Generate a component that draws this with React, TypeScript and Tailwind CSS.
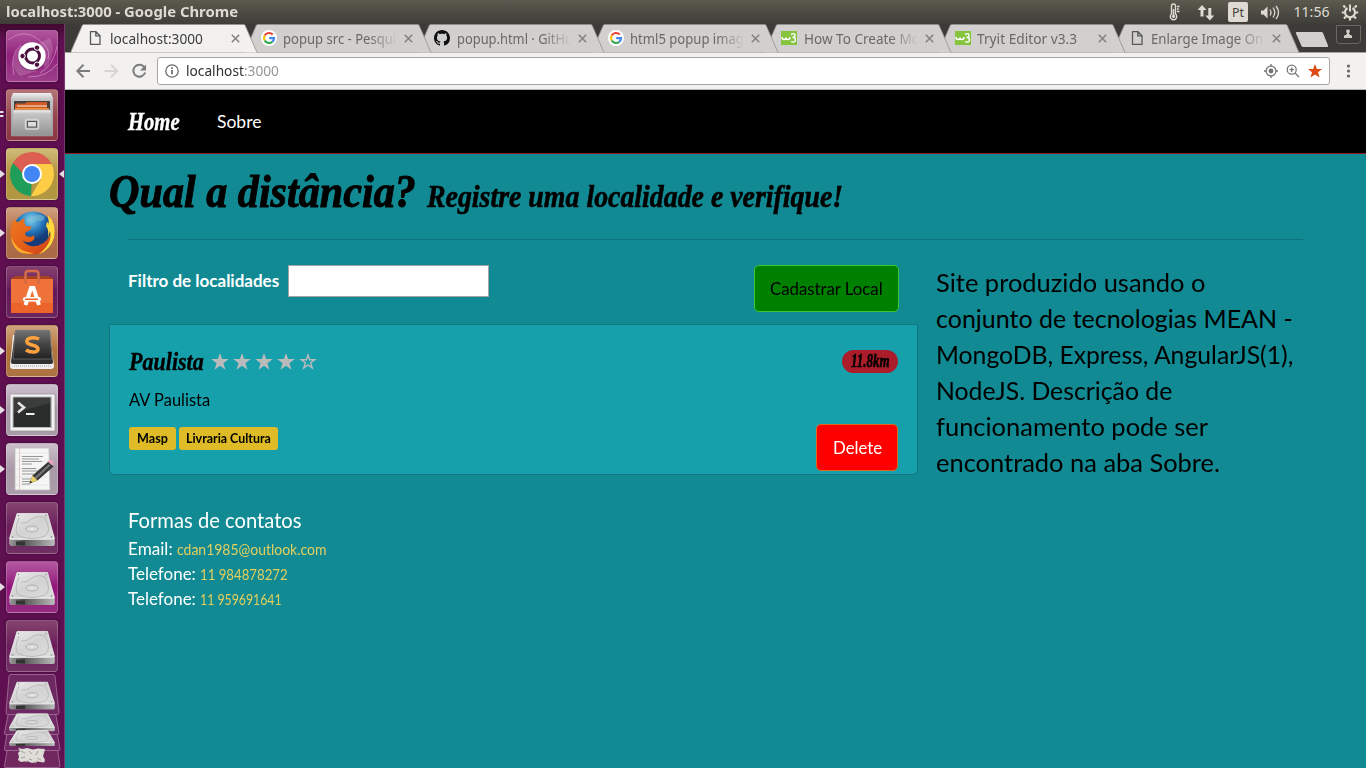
import { useLayoutEffect, useRef, useState } from "react";
import type { ReactNode } from "react";

const UI = "font-['Noto_Sans','Liberation_Sans',sans-serif]";
const SCRIPT = "font-['Liberation_Serif',serif] font-bold italic";
const BODY = "font-['Lato','Liberation_Sans',sans-serif]";

/* A single line of text whose glyphs are scaled to span a given width. */
function Fit({ w, className = "", children }: { w: number; className?: string; children: ReactNode }) {
  const ref = useRef<HTMLSpanElement>(null);
  const [k, setK] = useState(1);
  useLayoutEffect(() => {
    if (ref.current) setK(w / ref.current.offsetWidth);
  }, [w]);
  return (
    <span className={`inline-block shrink-0 whitespace-nowrap ${className}`} style={{ width: w }}>
      <span ref={ref} className="inline-block origin-left" style={{ transform: `scaleX(${k})` }}>
        {children}
      </span>
    </span>
  );
}

/* ---------- top panel ---------- */
function TopPanel() {
  return (
    <header className={`flex h-6 shrink-0 items-center bg-linear-to-b from-[#5c5a4f] to-[#3e3d38] pl-1.5 text-[#dfdbd2] ${UI}`}>
      <Fit w={232} className="text-[13.5px] leading-6 font-bold">localhost:3000 - Google Chrome</Fit>
      <svg className="ml-auto h-6 w-[200px]" viewBox="1166 0 200 24" fill="none" stroke="#dfdbd2">
        <path d="M1171.5 14V6a2 2 0 0 1 4 0v8a3.2 3.2 0 1 1-4 0z" strokeWidth="1.4" />
        <path d="M1173.5 9v7M1177 6.5h2.5M1177 9h1.8M1177 11.5h2.5" strokeWidth="1.5" />
        <circle cx="1173.5" cy="16.3" r="1.6" fill="#dfdbd2" stroke="none" />
        <path d="M1202 5l4.500 5h-3v6.500h-3V10h-3zM1209.800 20.500l-4.500-5h3V8h3v7.500h3z" fill="#dfdbd2" stroke="none" />
        <rect x="1228" y="2" width="20" height="20" rx="2" fill="#dfdbd2" stroke="none" />
        <path d="M1261 10.500h2.500l4-4v12l-4-4h-2.500z" fill="#dfdbd2" stroke="none" />
        <path d="M1270 9.500q2 3 0 6M1273 7.500q3.500 5 0 10M1276 6q5 6.500 0 13" strokeWidth="1.300" />
        <text x="1232" y="17" fontSize="12" fill="#45433c" stroke="none" fontFamily="Noto Sans" textLength="12" lengthAdjust="spacingAndGlyphs">Pt</text>
        <text x="1293.500" y="17" fontSize="14" fill="#dfdbd2" stroke="none" fontFamily="Noto Sans" textLength="36" lengthAdjust="spacingAndGlyphs">11:56</text>
        <path d="M1347.500 8a5 5 0 1 0 5 0" strokeWidth="2.100" />
        <path d="M1350 4.500v7" strokeWidth="2" />
        <path d="M1345.300 7.500l-2-2M1354.700 7.500l2-2M1344.500 12.500h-2.700M1355.500 12.500h2.700M1346 16.500l-2 2M1354 16.500l2 2M1350 18v2.500" strokeWidth="2.200" />
      </svg>
    </header>
  );
}

/* ---------- launcher ---------- */
function Tile({ bg, mark, active, children }: { bg: string; mark?: number; active?: boolean; children: ReactNode }) {
  return (
    <div className="relative flex h-[52px] w-full shrink-0 pl-[6px]">
      <div className={`relative h-[52px] w-[52px] overflow-hidden rounded-[4px] border border-white/20 shadow-[0_0_3px_rgba(0,0,0,0.4)] ${bg}`}>
        <svg className="-m-px h-[52px] w-[52px]" viewBox="0 0 52 52">{children}</svg>
      </div>
      {mark === 1 && <svg className="absolute top-[21px] left-0 h-[10px] w-[5px]" viewBox="0 0 5 10"><path d="M0 1l5 4-5 4z" fill="#e4dfe2" /></svg>}
      {mark === 2 && <svg className="absolute top-[21px] left-0 h-[10px] w-[5px]" viewBox="0 0 5 10"><path d="M0 1h3l1 1-1 1H0zM0 5h3l1 1-1 1H0z" fill="#e4dfe2" /></svg>}
      {active && <svg className="absolute top-[21px] right-0 h-[10px] w-[5px]" viewBox="0 0 5 10"><path d="M5 1L0 5l5 4z" fill="#e4dfe2" /></svg>}
    </div>
  );
}

function DiskArt() {
  return (
    <g>
      <path d="M11 11.500h30.500l7 25v5q0 2-2 2h-41q-2 0-2-2v-5z" fill="#d9d9d9" />
      <path d="M11 11.500h30.500l7 25h-45z" fill="url(#metal)" stroke="#eee" strokeWidth=".6" />
      <path d="M4 38h44.500v4.500q0 1.500-1.500 1.500H5.500Q4 44 4 42.500z" fill="url(#edge)" />
      <path d="M10 39.500h9v4h-9z" fill="#333" />
      <path d="M13 16q-6 14 0 18 13 5 26 0 7-5 0-18-7-3-13 1-5 5-11 4" fill="none" stroke="#b6b6b6" strokeWidth=".9" />
      <ellipse cx="26" cy="27" rx="6" ry="3" fill="#ddd" stroke="#aaa" strokeWidth=".9" />
      <ellipse cx="26" cy="27" rx="3" ry="1.300" fill="#eee" stroke="#c4c4c4" strokeWidth=".5" />
      <g fill="#888"><circle cx="12.500" cy="13.500" r=".7" /><circle cx="40" cy="13.500" r=".7" /><circle cx="6.500" cy="35" r=".8" /><circle cx="45.500" cy="35" r=".8" /></g>
    </g>
  );
}

const DISK_BG = "bg-linear-to-b from-[#84446f] via-[#6a1c5a] to-[#703064]";

function Launcher() {
  return (
    <aside className="flex w-[65px] shrink-0 flex-col gap-[7px] overflow-hidden border-r border-[#75396c] bg-linear-to-b from-[#40092f] via-[#5f0f50] via-[2%] to-[#5f1051] pt-[6px]">
      <Tile bg="bg-linear-to-b from-[#b0559c] via-[#91207c] to-[#9c3f8a]">
        <g fill="none" stroke="#dca4d0" strokeWidth="1" opacity=".6">
          <path d="M2 10q16-12 30-1 14 10 10 20M8 45Q3 25 15 15M22 47q20 0 29-13M51 16Q48 35 34 43" />
        </g>
        <path d="M7 36Q7 17 24 12l-7 27zM44 8q8 17-5 30l-8-24zM14 46q-8-6-6-16l23 11z" fill="#fff" opacity=".16" />
        <circle cx="26" cy="27" r="14" fill="#3b0731" opacity=".3" />
        <circle cx="26" cy="26" r="13.700" fill="#fff" />
        <circle cx="26.500" cy="26" r="7" fill="none" stroke="#4b1040" strokeWidth="3" />
        <g fill="#4b1040" stroke="#fff" strokeWidth="1"><circle cx="16.500" cy="26" r="2.700" /><circle cx="31" cy="17.600" r="2.700" /><circle cx="31" cy="34.700" r="2.700" /></g>
      </Tile>
      <Tile bg="bg-linear-to-b from-[#b57579] via-[#96464f] to-[#8c3443]" mark={2}>
        <defs>
          <linearGradient id="metal" x1="0" y1="0" x2="1" y2="1"><stop offset="0" stopColor="#ececec" /><stop offset=".5" stopColor="#d2d2d2" /><stop offset="1" stopColor="#dedede" /></linearGradient>
          <linearGradient id="edge" x1="0" y1="0" x2="1" y2="0"><stop offset="0" stopColor="#999" /><stop offset=".3" stopColor="#555" /><stop offset="1" stopColor="#bbb" /></linearGradient>
          <linearGradient id="cab" x1="0" y1="0" x2="0" y2="1"><stop offset="0" stopColor="#f0f0f0" /><stop offset=".15" stopColor="#c4c4c4" /><stop offset="1" stopColor="#919191" /></linearGradient>
          <linearGradient id="dark" x1="0" y1="0" x2="0" y2="1"><stop offset="0" stopColor="#747474" /><stop offset=".5" stopColor="#444" /><stop offset="1" stopColor="#222" /></linearGradient>
          <radialGradient id="globe" cx=".45" cy=".2"><stop offset="0" stopColor="#80d2f0" /><stop offset=".6" stopColor="#2374b8" /><stop offset="1" stopColor="#173a78" /></radialGradient>
          <linearGradient id="fox" x1="0" y1="0" x2="1" y2="1"><stop offset="0" stopColor="#ed7b20" /><stop offset=".6" stopColor="#e25a16" /><stop offset="1" stopColor="#c7371b" /></linearGradient>
        </defs>
        <path d="M7 4h38l2 5v38H5V9z" fill="url(#cab)" />
        <path d="M8 12h36v10H8z" fill="#46413e" />
        <path d="M9 16q0-1.500 2-1.500h8l2-1.500h20v9H9z" fill="#cf5a24" />
        <path d="M9 19h34v3H9z" fill="#e98b3a" /><path d="M11 17h30" stroke="#fff3e0" />
        <path d="M7 21h38l1.500 26h-41z" fill="url(#cab)" stroke="#aaa" strokeWidth=".5" />
        <rect x="19.500" y="30.500" width="13" height="9.500" rx="1.500" fill="none" stroke="#d5d5d5" strokeWidth="1.600" />
        <rect x="21.500" y="32.500" width="9" height="5.500" fill="#ddd" stroke="#555" />
      </Tile>
      <Tile bg="bg-linear-to-b from-[#d0ba78] via-[#b3943e] to-[#b29742]" mark={1} active>
        <path d="M26 26L7 15A22 22 0 0 1 45.500 16z" fill="#d95b4e" />
        <path d="M26 26L25 48A22 22 0 0 1 7 15z" fill="#1f9d5b" />
        <path d="M26 16h19.500A22 22 0 0 1 25 48l10-17z" fill="#fdce45" />
        <path d="M7 15A22 22 0 0 1 45.500 16H26q-8 1-9.500 9z" fill="#dc5f52" />
        <circle cx="26" cy="26" r="10" fill="#fff" /><circle cx="26" cy="26" r="8" fill="#4285f4" />
      </Tile>
      <Tile bg="bg-linear-to-b from-[#cf9f80] via-[#b26d46] to-[#a96a48]" mark={1}>
        <circle cx="27" cy="25" r="20.500" fill="url(#globe)" />
        <path d="M31 8q6-1 8 3-3 5-8 2-6 4-11 1 3-5 11-6z" fill="#7dbbd0" opacity=".6" />
        <path d="M43 9q8 9 4.500 23Q41 47 26 47.500 8 46 4.500 29q-.5-12 4-17 1 3 4 3l6-4q-1 6 2 8l5 .5-1 3-5 3q-1 3 2 4 3 1 6-1 3 3-2 6-5 2-9-1 6 8 16 5 11-4 13-16z" fill="url(#fox)" />
        <path d="M42 8q9 9 6 23-4 12-15 16 14-11 11-23l-2 7q1-9-2-12l1-4q2 1 2 3z" fill="#ffd83b" />
        <path d="M5 29q5 16 23 17-17 4-22-11z" fill="#ffad2b" />
      </Tile>
      <Tile bg="bg-linear-to-b from-[#83406f] via-[#651559] to-[#692660]">
        <path d="M5 13h42v34H5z" fill="#ee723a" /><path d="M5 13l4-3h34l4 3z" fill="#a7431f" />
        <path d="M5 37h42v10H5z" fill="#e95f25" opacity=".7" />
        <path d="M19.500 18V8q0-3 3-3h7q3 0 3 3v10" fill="none" stroke="#d66d46" strokeWidth="2.500" />
        <path d="M19.500 39l5.500-17h2.500L33 39" fill="none" stroke="#fff" strokeWidth="4" />
        <rect x="17" y="31" width="18" height="4.500" rx="2" fill="#fff" /><path d="M19 33.200h13" stroke="#e76525" strokeWidth="1.500" />
      </Tile>
      <Tile bg="bg-linear-to-b from-[#d0a37a] via-[#b1733a] to-[#ac7342]" mark={1}>
        <path d="M7 10l37-2 4 33q0 3-3 3H7q-3 0-3-3z" fill="#eee" />
        <path d="M8 41h37" stroke="#aaa" strokeWidth="1" strokeDasharray="1 1" />
        <path d="M9 7q0-2 2-2h31q2 0 2 2l3 30q0 2-2 2H7q-2 0-2-2z" fill="#303030" />
        <path d="M9 7q0-2 2-2h31q2 0 2 2l2 27H7z" fill="url(#dark)" stroke="#888" strokeWidth=".6" />
        <path d="M33 14q-4-2-8-1-5 1-4 4 .5 2 5 3 6 1.500 6 4 0 3-5 3-4 0-7-2" fill="none" stroke="#ffa13d" strokeWidth="3.500" />
      </Tile>
      <Tile bg="bg-linear-to-b from-[#cdbfcb] via-[#aa99a8] to-[#ab9ca9]" mark={1}>
        <rect x="4" y="10" width="45" height="37" rx="1.500" fill="#f2f2f2" stroke="#999" strokeWidth=".8" />
        <rect x="6.500" y="12.500" width="39.500" height="31.500" fill="#bbb" /><rect x="7.500" y="13.500" width="37" height="29.500" fill="#2b2c2c" />
        <path d="M8 14h36v5L8 29z" fill="#fff" opacity=".08" />
        <path d="M12 18.500l6 5-6 5" fill="none" stroke="#e5e5e5" strokeWidth="2.600" /><path d="M20 30h8.500" stroke="#eee" strokeWidth="2" />
      </Tile>
      <Tile bg="bg-linear-to-b from-[#cdbfcb] via-[#aa99a8] to-[#ab9ca9]" mark={1}>
        <path d="M9 5h34l1 42H9z" fill="#f5f5f3" stroke="#bbb" strokeWidth=".8" />
        <path d="M9 10h34M9 18h34M9 26h34M9 34h34M9 42h34" stroke="#dce3ef" strokeWidth=".8" /><path d="M13.500 5v42" stroke="#e7b3b3" strokeWidth=".7" />
        <path d="M16 13.500h21M16 16h17M16 18.500h20M16 21h10M16 25.500h14M16 28h21M16 31h12M16 36h14M16 38.500h11M16 41h8" stroke="#979797" strokeWidth="1" />
        <path d="M23.500 40.500l3-8 16-14 5 5-16 14z" fill="#383838" /><path d="M28 35l15-14 1.500 1.500-15 14z" fill="#777" />
        <path d="M23.500 40.500l3-8 5 5z" fill="#e7cf65" /><path d="M23.500 40.500l1-2.800 1.800 1.800z" fill="#222" />
        <path d="M41.500 18.500l2-1.500q3-1 4 2 .5 2-1 3.500z" fill="#e8a4bd" />
      </Tile>
      <Tile bg={DISK_BG}><DiskArt /></Tile>
      <Tile bg="bg-linear-to-b from-[#b257a0] via-[#92127b] to-[#932c80]" mark={1}><DiskArt /></Tile>
      <Tile bg={DISK_BG}><DiskArt /></Tile>
      <svg className="-mt-[5px] h-[94px] w-[63px] shrink-0" viewBox="0 674 63 94">
        <g stroke="#9d6490" strokeWidth="1">
          <path d="M8 745h49l3 21q0 1.500-2 1.500H6q-2 0-1.500-1.500z" fill="#70285f" />
          <path d="M8 727h48l4 22q0 1.500-2 1.500H6q-2 0-1.500-1.500z" fill="#6e2863" />
          <path d="M9 710h46l4 23q0 1.500-2 1.500H6q-2 0-1.500-1.500z" fill="#6e2863" />
          <path d="M11 674.500h42q2 0 2 2l4 36q0 2-2 2H8q-2 0-2-2l3-36q0-2 2-2z" fill="#6d2962" />
        </g>
        <g transform="translate(6 672.500) scale(1 .84)"><DiskArt /></g>
        <g transform="translate(6 707.500) scale(1 .54)"><DiskArt /></g>
        <g transform="translate(6 725) scale(1 .48)"><DiskArt /></g>
        <path d="M18 748l5 1 4-1 6 1.500 5-1 7 .5-1 4-1 3 2 4-1 2.500-7-1-5 1.500-5-2-6 1-3-2 1-3-1-4 2-2z" fill="#dddcd6" />
        <path d="M21 751l4 2M29 751l3 3M38 751l-2 4M21 758l4-1M29 759l3 1M37 758l4 2M25 762l3-1M34 763l3-1" stroke="#a3a298" fill="none" />
      </svg>
    </aside>
  );
}

/* ---------- browser chrome ---------- */
type Icon = "page" | "google" | "github" | "w3";
const TABS: { icon: Icon; text: string; w: number }[] = [
  { icon: "page", text: "localhost:3000", w: 93 },
  { icon: "google", text: "popup src - Pesqui", w: 113 },
  { icon: "github", text: "popup.html · GitHu", w: 116 },
  { icon: "google", text: "html5 popup imag", w: 114 },
  { icon: "w3", text: "How To Create Mo", w: 116 },
  { icon: "w3", text: "Tryit Editor v3.3", w: 100 },
  { icon: "page", text: "Enlarge Image On", w: 112 },
];

function Favicon({ icon }: { icon: Icon }) {
  return (
    <svg className="h-4 w-4 shrink-0" viewBox="0 0 16 16">
      {icon === "page" && <path d="M3.500 1.700h5.500l4 4v8.600h-9.500zM8.800 1.700v4.200h4.200" fill="none" stroke="#595959" strokeWidth="1.300" />}
      {icon === "google" && (
        <g fill="none" strokeWidth="2.200">
          <circle cx="8" cy="8" r="8" fill="#fff" />
          <path d="M11.700 4.600A5 5 0 0 0 3.700 5.500" stroke="#ea4335" />
          <path d="M3.700 5.500a5 5 0 0 0 0 5" stroke="#fbbc05" />
          <path d="M3.700 10.500a5 5 0 0 0 7.700 1.200" stroke="#34a853" />
          <path d="M11.400 11.700A5 5 0 0 0 13 8.200H8.200" stroke="#4285f4" />
        </g>
      )}
      {icon === "github" && <path fill="#111" d="M8 0C3.580 0 0 3.580 0 8c0 3.540 2.290 6.530 5.470 7.590.4.070.55-.17.55-.38 0-.19-.01-.82-.01-1.490-2.010.37-2.530-.49-2.690-.94-.09-.23-.48-.94-.82-1.130-.28-.15-.68-.52-.01-.53.63-.01 1.080.58 1.230.82.72 1.210 1.870.87 2.330.66.070-.52.28-.87.51-1.070-1.780-.2-3.640-.89-3.640-3.950 0-.87.31-1.590.82-2.150-.08-.2-.36-1.020.08-2.120 0 0 .67-.21 2.200.82.64-.18 1.320-.27 2-.27s1.360.09 2 .27c1.530-1.040 2.200-.82 2.200-.82.44 1.100.16 1.920.08 2.120.51.56.82 1.270.82 2.150 0 3.070-1.870 3.750-3.650 3.950.29.25.54.73.54 1.480 0 1.070-.01 1.930-.01 2.200 0 .21.15.46.55.38A8.010 8.010 0 0 0 16 8c0-4.420-3.580-8-8-8z" />}
      {icon === "w3" && (
        <g>
          <rect x="0" y="1" width="16" height="14" fill="#86c440" />
          <path d="M1 7q0 2.500 2 2.500t2-2q0 2 2 2t2-2.500M10 4.500q4-2 4 .8 0 2-2.500 2 3 .2 3 2.700-.3 3-4.500 1.700" fill="none" stroke="#fff" strokeWidth="1.400" />
        </g>
      )}
    </svg>
  );
}

function Tab({ tab, index }: { tab: (typeof TABS)[number]; index: number }) {
  const active = index === 0;
  const fill = active ? "#f2f1f0" : "#d2d0cf";
  return (
    <div className="relative flex h-[29px] w-[173.600px] shrink-0" style={{ zIndex: 20 - index }}>
      <svg className="absolute top-0 left-0 h-[29px] w-[188px]" viewBox="0 0 188 29">
        <path d="M-.5 28.500L11.200 1.500q.5-1 1.500-1h160q1 0 1.500 1l11.800 27z" fill={fill} />
        <path d="M-.5 28.500L11.200 1.500q.5-1 1.500-1h160q1 0 1.500 1l11.800 27" fill="none" stroke="#93918e" strokeWidth=".8" />
      </svg>
      <div className="relative flex h-7 items-center pl-4">
        <Favicon icon={tab.icon} />
        <div className={`ml-[6.500px] w-[115px] overflow-hidden ${tab.w > 105 ? "[mask-image:linear-gradient(to_right,black_75%,transparent_100%)]" : ""}`}>
          <Fit w={tab.w} className={`text-[14px] leading-6 ${UI} ${active ? "text-[#3c3c3c]" : "text-[#6a6866]"}`}>{tab.text}</Fit>
        </div>
        <svg className="ml-[6px] h-[9px] w-[9px]" viewBox="0 0 9 9"><path d="M.8.8l7.400 7.400M8.200.8L.8 8.200" stroke="#858381" strokeWidth="1.600" /></svg>
      </div>
    </div>
  );
}

function BrowserChrome() {
  return (
    <div className="shrink-0">
      <div className="flex h-[29px] bg-[#3c3b37] pl-1.5 shadow-[inset_0_-1px_0_#a3a19e]">
        {TABS.map((t, i) => <Tab key={i} tab={t} index={i} />)}
        <svg className="relative z-30 ml-auto h-[28px] w-[76px] shrink-0" viewBox="1290 24 76 28">
          <path d="M1296.500 32h25q1 0 1.500 1l5 12.500q.5 1.500-1 1.500h-24q-1 0-1.500-1l-5.500-12.500q-.5-1.500.5-1.500z" fill="#d2d0cf" />
          <path d="M1336.500 25.500h24v15q0 3-3 3h-18q-3 0-3-3z" fill="#3a3935" stroke="#6a6863" />
          <path d="M1343.500 38.500v-3l3-1.500q-2-5 1.500-5t1.500 5l3 1.500v3z" fill="#cfcdc8" stroke="#181816" strokeWidth=".7" />
        </svg>
      </div>
      <div className="flex h-9 items-center bg-[#f2f1f0] pl-[11px]">
        <svg className="h-[16px] w-[75px]" viewBox="76 63 75 16" fill="none" strokeWidth="2">
          <path d="M90 71H77.500M83.500 64.800L77.300 71l6.200 6.200" stroke="#7c7c7c" />
          <path d="M104.500 71H117M111 64.800l6.200 6.200-6.200 6.200" stroke="#d6d5d4" />
          <path d="M144.300 67.300a6 6 0 1 0 .8 5.200" stroke="#7c7c7c" /><path d="M146 64.500v6h-6z" fill="#7c7c7c" />
        </svg>
        <div className="ml-[6px] flex h-7 w-[1173px] items-center rounded-[3px] border border-[#a8a6a4] bg-white pl-[7px]">
          <svg className="h-[14px] w-[14px]" viewBox="0 0 14 14"><circle cx="7" cy="7" r="6.200" fill="none" stroke="#6b6b6b" strokeWidth="1.300" /><path d="M7 6v4.300M7 3.300v1.600" stroke="#6b6b6b" strokeWidth="1.700" /></svg>
          <Fit w={93} className={`ml-[7px] text-[14px] leading-6 text-[#303030] ${UI}`}>localhost<span className="text-[#969696]">:3000</span></Fit>
          <svg className="ml-auto h-4 w-[66px]" viewBox="1263 63 66 16" fill="none" stroke="#757575">
            <circle cx="1271" cy="71" r="4.900" strokeWidth="1.200" /><circle cx="1271" cy="71" r="2.400" fill="#757575" stroke="none" />
            <path d="M1271 64v2.500M1271 75.500V78M1264 71h2.500M1275.500 71h2.500" strokeWidth="1.300" />
            <circle cx="1291.700" cy="69.700" r="4.500" strokeWidth="1.300" /><path d="M1295 73l4 4M1289.500 69.700h4.400M1291.700 67.500v4.400" strokeWidth="1.300" />
            <path d="M1315 64l1.900 4.900 5.200.2-4.100 3.200 1.500 5.200-4.500-3-4.500 3 1.500-5.200-4.100-3.200 5.200-.2z" fill="#dd4b12" stroke="none" />
          </svg>
        </div>
        <svg className="ml-[16px] h-4 w-[5px]" viewBox="0 0 5 16" fill="#666"><circle cx="2.500" cy="3" r="1.600" /><circle cx="2.500" cy="8" r="1.600" /><circle cx="2.500" cy="13" r="1.600" /></svg>
      </div>
      <div className="h-px bg-[#b9b8b6]" />
    </div>
  );
}

/* ---------- page ---------- */
function Rating({ value }: { value: number }) {
  return (
    <svg className="-mt-px ml-[7px] h-[19px] w-[106px]" viewBox="0 0 106 19">
      {[0, 1, 2, 3, 4].map((i) => (
        <path
          key={i}
          transform={`translate(${i * 22} 0)`}
          d="M9 1l2.100 6.100h6.700l-5.400 4.100 2.100 6.600L9 13.800l-5.500 4 2.100-6.600L.2 7.100h6.700z"
          fill={i < value ? "#bbb" : "none"}
        />
      ))}
      <path transform="translate(88 0)" d="M9 3l1.600 4.700h5.200l-4.200 3.100 1.600 5.200L9 12.900 4.800 16l1.600-5.200-4.200-3.100h5.200z" fill="none" stroke="#bbb" strokeWidth="1.400" />
    </svg>
  );
}

const ABOUT: [string, number][] = [
  ["Site produzido usando o", 269],
  ["conjunto de tecnologias MEAN -", 357],
  ["MongoDB, Express, AngularJS(1),", 357],
  ["NodeJS. Descrição de", 236],
  ["funcionamento pode ser", 272],
  ["encontrado na aba Sobre.", 284],
];

const CONTACTS: [string, number, string, number][] = [
  ["Email:", 45, "cdan1985@outlook.com", 149],
  ["Telefone:", 68, "11 984878272", 88],
  ["Telefone:", 68, "11 959691641", 82],
];

function Page() {
  return (
    <main className={`flex-1 overflow-hidden bg-[#118a93] text-black ${BODY}`}>
      <nav className="flex h-16 items-start border-b border-[#901c25] bg-black pt-[18px] pl-[63px] text-white">
        <Fit w={52} className={`text-[25px] leading-7 [-webkit-text-stroke:0.4px] ${SCRIPT}`}>Home</Fit>
        <Fit w={44} className="ml-[37px] pt-[2px] text-[17.500px] leading-6">Sobre</Fit>
      </nav>
      <h1 className={`flex h-[85px] items-baseline pt-[13px] pl-[44px] ${SCRIPT}`}>
        <Fit w={307} className="text-[46px] leading-[50px] [-webkit-text-stroke:1px]">Qual a distância?</Fit>
        <Fit w={416} className="ml-[11px] text-[31px] leading-[36px] [-webkit-text-stroke:0.6px]">Registre uma localidade e verifique!</Fit>
      </h1>
      <hr className="ml-[63px] w-[1175px] border-0 border-t border-[#0c747c]" />
      <div className="flex pl-[44px]">
        <section className="w-[809px]">
          <div className="flex h-[84px] items-start pt-[25px] pr-[19px] pl-[19px]">
            <Fit w={151} className="pt-[4px] text-[17px] leading-6 font-bold text-white">Filtro de localidades</Fit>
            <input className="ml-[9px] h-8 w-[201px] border border-[#a5a5a5] bg-white" />
            <button className="ml-auto flex h-[47px] w-[145px] items-center justify-center rounded-[5px] border border-[#3fc72f] bg-[#008000]">
              <Fit w={113} className="text-[17.500px] leading-6">Cadastrar Local</Fit>
            </button>
          </div>
          <article className="flex h-[151px] justify-between rounded-b-[5px] border border-[#0e7780] bg-[#15a0ac] px-[19px]">
            <div className="pt-[22px]">
              <div className="flex h-[30px] items-center">
                <Fit w={75} className={`text-[25px] leading-[30px] [-webkit-text-stroke:0.4px] ${SCRIPT}`}>Paulista</Fit>
                <Rating value={4} />
              </div>
              <div className="mt-[11px] h-6"><Fit w={81} className="text-[17.500px] leading-6">AV Paulista</Fit></div>
              <div className="mt-[15px] flex gap-[3px] text-[13px] leading-[23px] font-bold">
                <span className="flex h-[23px] w-[47px] justify-center rounded-[3px] bg-[#debb27]"><Fit w={31}>Masp</Fit></span>
                <span className="flex h-[23px] w-[99px] justify-center rounded-[3px] bg-[#debb27]"><Fit w={85}>Livraria Cultura</Fit></span>
              </div>
            </div>
            <div className="flex flex-col items-end justify-between pt-[25px] pb-[3px]">
              <span className={`flex h-[23px] w-[56px] justify-center rounded-full bg-[#ab1d2a] ${SCRIPT}`}>
                <Fit w={39} className="text-[18px] leading-[22px] [-webkit-text-stroke:0.5px]">11.8km</Fit>
              </span>
              <button className="flex h-[47px] w-[82px] items-center justify-center rounded-[5px] border border-[#e06a18] bg-[#ff0000] text-white">
                <Fit w={49} className="text-[17.500px] leading-6">Delete</Fit>
              </button>
            </div>
          </article>
          <footer className="pt-[30px] pl-[19px] text-white">
            <div className="h-[31px]"><Fit w={174} className="text-[21px] leading-[30px]">Formas de contatos</Fit></div>
            {CONTACTS.map(([label, lw, value, vw]) => (
              <div key={value} className="flex h-[25px] items-baseline">
                <Fit w={lw} className="text-[17.500px] leading-[25px]">{label}</Fit>
                <Fit w={vw} className="ml-[4px] text-[15px] leading-[25px] text-[#e3cf5d]">{value}</Fit>
              </div>
            ))}
          </footer>
        </section>
        <aside className="flex flex-col pt-[24px] pl-[18px] text-[25px] leading-9">
          {ABOUT.map(([line, w]) => <Fit key={line} w={w}>{line}</Fit>)}
        </aside>
      </div>
    </main>
  );
}

export default function App() {
  return (
    <div className="flex h-screen w-screen flex-col overflow-hidden">
      <TopPanel />
      <div className="flex min-h-0 flex-1">
        <Launcher />
        <div className="flex min-w-0 flex-1 flex-col">
          <BrowserChrome />
          <Page />
        </div>
      </div>
    </div>
  );
}
